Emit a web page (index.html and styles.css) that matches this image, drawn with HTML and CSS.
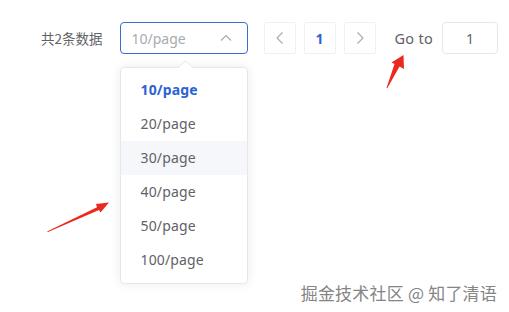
FILE: index.html
```html
<!DOCTYPE html>
<html lang="zh">
<head>
<meta charset="utf-8">
<title>Pagination</title>
<link rel="stylesheet" href="styles.css">
</head>
<body>
<div class="pager">
  <span class="total">共2条数据</span>
  <div class="select-wrap">
    <div class="select">
      <span class="select-text">10/page</span>
      <svg class="caret" width="14" height="14" viewBox="0 0 14 14"><path d="M2 9.5 L7 4.5 L12 9.5" fill="none" stroke="#a8abb2" stroke-width="1.2"/></svg>
    </div>
    <div class="dropdown">
      <span class="dd-arrow"></span>
      <ul class="options">
        <li class="opt selected">10/page</li>
        <li class="opt">20/page</li>
        <li class="opt hover">30/page</li>
        <li class="opt">40/page</li>
        <li class="opt">50/page</li>
        <li class="opt">100/page</li>
      </ul>
    </div>
  </div>
  <div class="pages">
    <button class="btn"><svg width="14" height="14" viewBox="0 0 14 14"><path d="M9.5 1.5 L4 7 L9.5 12.5" fill="none" stroke="#a8abb2" stroke-width="1.2"/></svg></button>
    <button class="btn num">1</button>
    <button class="btn"><svg width="14" height="14" viewBox="0 0 14 14"><path d="M4.5 1.5 L10 7 L4.5 12.5" fill="none" stroke="#a8abb2" stroke-width="1.2"/></svg></button>
  </div>
  <span class="goto">Go to</span>
  <div class="jump">1</div>
</div>
<svg class="anno" width="509" height="312" viewBox="0 0 509 312">
  <polygon points="47,231.5 97,207.2 96,204 109,202.5 100.5,212.5 99,210 48,232" fill="#ea2a1f"/>
  <polygon points="386.5,88 394.5,64 391.5,62.5 403.5,55 404,69 399.5,66.5 387.3,88.2" fill="#ea2a1f"/>
</svg>
<div class="watermark">掘金技术社区 @ 知了清语</div>
</body>
</html>
```

FILE: styles.css
```css
html, body {
  margin: 0;
  padding: 0;
  background: #ffffff;
  width: 509px;
  height: 312px;
  overflow: hidden;
  position: relative;
  font-family: "Noto Sans", "Noto Sans CJK SC", sans-serif;
}
.pager {
  display: flex;
  align-items: center;
  padding: 22px 0 0 41px;
  height: 32px;
  font-size: 14px;
  color: #606266;
}
.total {
  margin-right: 17px;
  font-family: "Noto Sans CJK SC", sans-serif;
  font-size: 13.5px;
}
.select-wrap {
  position: relative;
  width: 128px;
  height: 32px;
}
.select {
  box-sizing: border-box;
  width: 128px;
  height: 32px;
  border: 1px solid #3a6cd6;
  border-radius: 4px;
  display: flex;
  align-items: center;
  justify-content: space-between;
  padding: 0 14px 0 11px;
}
.select-text {
  color: #a8abb2;
  font-size: 14px;
}
.caret { display: block; }
.dropdown {
  position: absolute;
  left: 0;
  top: 45px;
  width: 128px;
  box-sizing: border-box;
  background: #fff;
  border: 1px solid #e4e7ed;
  border-radius: 4px;
  box-shadow: 0 0 12px rgba(0,0,0,0.08);
  padding: 5px 0 6px;
  z-index: 2;
}
.dd-arrow {
  position: absolute;
  top: -6px;
  left: 59px;
  width: 10px;
  height: 10px;
  background: #fff;
  border-left: 1px solid #e4e7ed;
  border-top: 1px solid #e4e7ed;
  border-top-left-radius: 2px;
  transform: rotate(45deg);
}
.options {
  list-style: none;
  margin: 0;
  padding: 0;
  position: relative;
}
.opt {
  height: 34px;
  line-height: 34px;
  padding: 0 20px;
  font-size: 14px;
  color: #606266;
  letter-spacing: 0.15px;
}
.opt.selected {
  color: #2c62d6;
  font-weight: 700;
}
.opt.hover {
  background: #f5f7fa;
}
.pages {
  display: flex;
  gap: 8px;
  margin-left: 16px;
}
.btn {
  box-sizing: border-box;
  width: 32px;
  height: 32px;
  border: 1px solid #eef0f3;
  background: #fff;
  border-radius: 2px;
  display: flex;
  align-items: center;
  justify-content: center;
  padding: 0;
  font-family: inherit;
}
.btn.num {
  color: #2c62d6;
  font-weight: 700;
  font-size: 14px;
}
.goto {
  margin-left: 19px;
  margin-right: 9px;
  font-size: 14.5px;
  letter-spacing: 0.3px;
}
.jump {
  box-sizing: border-box;
  width: 56px;
  height: 32px;
  border: 1px solid #e4e7ed;
  border-radius: 4px;
  display: flex;
  align-items: center;
  justify-content: center;
  color: #606266;
  font-size: 14px;
}
.anno {
  position: absolute;
  left: 0;
  top: 0;
  z-index: 3;
  pointer-events: none;
}
.watermark {
  position: absolute;
  right: 12px;
  top: 280px;
  font-family: "Noto Sans CJK SC", sans-serif;
  font-size: 17px;
  color: #858585;
  text-shadow: 0 0 1px #fff, 0 0 2px #fff;
  letter-spacing: 0.2px;
  z-index: 4;
}
```
